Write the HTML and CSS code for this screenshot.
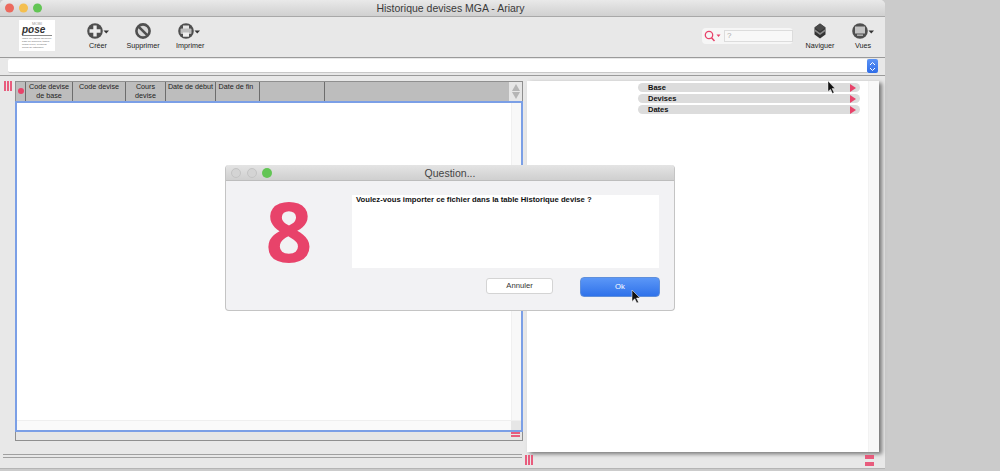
FILE: index.html
```html
<!DOCTYPE html>
<html lang="fr">
<head>
    <meta charset="UTF-8">
    <title>Historique devises MGA - Ariary</title>
    <link rel="stylesheet" href="styles.css">
</head>
<body>
    <div class="window">
        <div class="titlebar">
            <div class="lights">
                <span class="light red"></span>
                <span class="light yellow"></span>
                <span class="light green"></span>
            </div>
            <div class="title">Historique devises MGA - Ariary</div>
        </div>

        <div class="toolbar">
            <div class="logo">
                <div class="logo-top">MOBI</div>
                <div class="logo-name">pose</div>
                <div class="logo-line"></div>
                <div class="logo-small">INSTALLATEUR SPIRIUM</div>
                <div class="logo-small">base de données, tables</div>
                <div class="logo-small">mises à jour, révisions</div>
                <div class="logo-small">accès au catalogue</div>
            </div>
            <div class="tool tool-create">
                <svg width="30" height="20" viewBox="0 0 30 20">
                    <circle cx="10" cy="10" r="7.800" fill="#4f4f4f"/>
                    <path d="M8.300 4.500h3.400v3.800h3.800v3.400h-3.800v3.800H8.300v-3.800H4.500V8.300h3.800z" fill="#ececec"/>
                    <path d="M18.500 9.500h5.500l-2.750 3z" fill="#333"/>
                </svg>
                <span>Créer</span>
            </div>
            <div class="tool tool-delete">
                <svg width="20" height="20" viewBox="0 0 20 20">
                    <circle cx="10" cy="10" r="6.600" fill="#d8d8d8" stroke="#4f4f4f" stroke-width="2.600"/>
                    <path d="M5.800 5.800l8.400 8.400" stroke="#4f4f4f" stroke-width="2.600"/>
                </svg>
                <span>Supprimer</span>
            </div>
            <div class="tool tool-print">
                <svg width="30" height="20" viewBox="0 0 30 20">
                    <circle cx="10" cy="10" r="7.800" fill="#4f4f4f"/>
                    <rect x="7" y="4.500" width="6" height="11" fill="#e4e4e4"/>
                    <rect x="4.500" y="7.500" width="11" height="5.500" rx="1" fill="#bdbdbd"/>
                    <rect x="7" y="11.500" width="6" height="4" fill="#efefef"/>
                    <path d="M18.500 9.500h5.500l-2.750 3z" fill="#333"/>
                </svg>
                <span>Imprimer</span>
            </div>
            <div class="search">
                <svg width="17" height="12" viewBox="0 0 17 12">
                    <circle cx="5" cy="5" r="3.700" fill="none" stroke="#e8436a" stroke-width="1.300"/>
                    <path d="M7.500 7.800l3 3.200" stroke="#e8436a" stroke-width="1.500"/>
                    <path d="M12.500 4.500h4l-2 2.500z" fill="#e8436a"/>
                </svg>
                <div class="search-input">?</div>
            </div>
            <div class="tool tool-nav">
                <svg width="20" height="20" viewBox="0 0 20 20">
                    <path d="M10 2.500l5.500 4v7l-5.500 4-5.500-4v-7z" fill="#333"/>
                    <path d="M4.500 8l5.500 4 5.500-4v2L10 14l-5.500-4z" fill="#8a8a8a"/>
                    <path d="M10 2.500l5.500 4-5.500 4-5.500-4z" fill="#4a4a4a"/>
                </svg>
                <span>Naviguer</span>
            </div>
            <div class="tool tool-views">
                <svg width="30" height="20" viewBox="0 0 30 20">
                    <circle cx="10" cy="10" r="7.800" fill="#4f4f4f"/>
                    <rect x="5" y="5.500" width="10" height="7" fill="#c4c4c4"/>
                    <rect x="7" y="13.500" width="6" height="1.300" fill="#c4c4c4"/>
                    <path d="M18.500 9.500h5.500l-2.750 3z" fill="#333"/>
                </svg>
                <span>Vues</span>
            </div>
        </div>

        <div class="filter-row">
            <div class="filter-field"></div>
            <div class="stepper">
                <svg width="7" height="11" viewBox="0 0 7 11">
                    <path d="M1 4l2.500-2.500L6 4M1 7l2.500 2.500L6 7" fill="none" stroke="#fff" stroke-width="1"/>
                </svg>
            </div>
        </div>

        <div class="content">
            <div class="left-col">
                <div class="list-area">
                    <div class="handle-v handle-top"><i></i><i></i><i></i></div>
                    <div class="list">
                        <div class="list-head">
                            <div class="col col-mark"><span class="dot"></span></div>
                            <div class="col col-a">Code devise de base</div>
                            <div class="col col-b">Code devise</div>
                            <div class="col col-c">Cours devise</div>
                            <div class="col col-d">Date de début</div>
                            <div class="col col-e">Date de fin</div>
                            <div class="col col-f"></div>
                            <div class="col-rest"></div>
                            <div class="sort-arrows">
                                <span class="arrow-up"></span>
                                <span class="arrow-down"></span>
                            </div>
                        </div>
                        <div class="list-body">
                            <div class="list-rows">
                                <div class="rows-white"></div>
                                <div class="rows-scroll"></div>
                            </div>
                            <div class="list-hscroll">
                                <div class="rows-corner"></div>
                            </div>
                        </div>
                        <div class="list-foot">
                            <div class="handle-h"><i></i><i></i></div>
                        </div>
                    </div>
                </div>
                <div class="rules"></div>
            </div>

            <div class="right-col">
                <div class="side-panel">
                    <div class="groups">
                        <div class="group">Base<span class="tri"></span></div>
                        <div class="group">Devises<span class="tri"></span></div>
                        <div class="group">Dates<span class="tri"></span></div>
                    </div>
                    <div class="side-scroll"></div>
                </div>
                <div class="side-foot">
                    <div class="handle-v"><i></i><i></i><i></i></div>
                    <div class="handle-h handle-big"><i></i><i></i></div>
                </div>
            </div>
        </div>
    </div>

    <svg class="cursor cursor-top" width="9" height="13" viewBox="0 0 9 13">
        <path d="M1 0l7 7.500H5l2 4-1.500 1-2-4.200L1 10.500z" fill="#111" stroke="#fff" stroke-width=".4"/>
    </svg>

    <div class="dialog">
        <div class="dialog-title">
            <div class="lights">
                <span class="light off"></span>
                <span class="light off"></span>
                <span class="light green"></span>
            </div>
            <div class="dialog-name">Question...</div>
        </div>
        <div class="dialog-main">
            <div class="big-num">8</div>
            <div class="message">Voulez-vous importer ce fichier dans la table Historique devise ?</div>
        </div>
        <div class="dialog-buttons">
            <div class="btn btn-cancel">Annuler</div>
            <div class="btn btn-ok">Ok</div>
        </div>
    </div>

    <svg class="cursor cursor-ok" width="10" height="14" viewBox="0 0 10 14">
        <path d="M1 0l8 8H5.500l2 4.200-1.700.8-2-4.300L1 11.500z" fill="#111" stroke="#fff" stroke-width=".5"/>
    </svg>
</body>
</html>
```
FILE: styles.css
```css
:root {
    --pink: #e8436a;
    --chrome: #e8e8e8;
    --line: #9a9a9a;
    --blue: #7b9fe6;
}
* {
    box-sizing: border-box;
}
html, body {
    height: 471px;
}
body {
    margin: 0;
    background: #cbcbcb;
    font-family: "Liberation Sans", Arial, sans-serif;
    color: #222;
    overflow: hidden;
    position: relative;
}
.window {
    width: 885px;
    height: 469px;
    background: var(--chrome);
    border-bottom: 1px solid #b5b5b5;
    border-radius: 5px 5px 0 0;
    display: flex;
    flex-direction: column;
}
.titlebar {
    height: 17px;
    flex: none;
    position: relative;
    background: linear-gradient(#e9e9e9, #d0d0d0);
    border-bottom: 1px solid #a8a8a8;
    border-radius: 5px 5px 0 0;
    display: flex;
    align-items: center;
    justify-content: center;
}
.title {
    font-size: 10.500px;
    color: #3a3a3a;
    margin-left: 16px;
}
.lights {
    position: absolute;
    left: 5px;
    top: 50%;
    transform: translateY(-50%);
    display: flex;
    gap: 5px;
}
.light {
    width: 9px;
    height: 9px;
    border-radius: 50%;
}
.red { background: #ec6a5e; }
.yellow { background: #f4bf4f; }
.green { background: #62c554; }
.off { background: #d4d4d4; border: 1px solid #c4c4c4; }

.toolbar {
    height: 41px;
    flex: none;
    display: flex;
    align-items: flex-start;
    border-bottom: 1px solid var(--line);
}
.logo {
    width: 36px;
    height: 31px;
    margin: 3px 0 0 19px;
    padding: 2px 3px;
    background: #fff;
    flex: none;
    overflow: hidden;
}
.logo-top {
    font-size: 4px;
    line-height: 4px;
    color: #999;
    text-align: center;
}
.logo-name {
    font-size: 10px;
    line-height: 7px;
    font-weight: bold;
    font-style: italic;
    color: #333;
}
.logo-line {
    height: 1px;
    background: #888;
    margin: 2px 0 1px;
}
.logo-small {
    font-size: 2.500px;
    line-height: 3px;
    color: #666;
    white-space: nowrap;
}
.tool {
    display: flex;
    flex-direction: column;
    align-items: flex-start;
    padding-top: 4px;
    font-size: 7.200px;
    line-height: 10px;
    color: #222;
    flex: none;
}
.tool span {
    display: block;
    white-space: nowrap;
}
.tool svg {
    display: block;
}
.tool-create {
    margin-left: 30px;
    width: 33px;
}
.tool-create span { margin-left: 4px; }
.tool-delete {
    width: 50px;
    align-items: center;
}
.tool-print {
    margin-left: 8px;
    width: 30px;
}
.search {
    margin: 11px 0 0 496px;
    width: 91px;
    height: 16px;
    background: #f6f6f6;
    border-radius: 4px;
    flex: none;
    display: flex;
    align-items: center;
    padding-left: 2px;
    gap: 3px;
}
.search-input {
    width: 69px;
    height: 12px;
    background: #f8f8f8;
    border: 1px solid #dcdcdc;
    font-size: 8px;
    line-height: 10px;
    color: #aaa;
    padding-left: 2px;
}
.tool-nav {
    margin-left: 12px;
    width: 30px;
    align-items: center;
}
.tool-views {
    margin-left: 15px;
    width: 30px;
}
.tool-views span { margin-left: 5px; }

.filter-row {
    height: 18px;
    flex: none;
    display: flex;
    padding: 1px 0 0 8px;
    border-bottom: 1px solid var(--line);
}
.filter-field {
    width: 859px;
    height: 14px;
    background: #fff;
    border-bottom: 1px solid #c8c8c8;
    border-radius: 2px 0 0 2px;
}
.stepper {
    width: 11px;
    height: 14px;
    background: linear-gradient(#5b93f5, #2f6de8);
    border-radius: 2px;
    display: flex;
    align-items: center;
    justify-content: center;
}
.stepper svg { display: block; }

.content {
    flex: 1;
    min-height: 0;
    display: flex;
    padding-top: 5px;
}
.left-col {
    width: 527px;
    flex: none;
    display: flex;
    flex-direction: column;
}
.list-area {
    height: 360px;
    flex: none;
    display: flex;
    padding-left: 4px;
}
.handle-v {
    display: flex;
    gap: 1px;
    height: 10px;
    flex: none;
}
.handle-v i {
    width: 2px;
    height: 100%;
    background: var(--pink);
    opacity: .85;
}
.handle-top {
    width: 11px;
}
.list {
    width: 508px;
    height: 360px;
    flex: none;
    display: flex;
    flex-direction: column;
    border-right: 1px solid #8f8f8f;
    border-bottom: 1px solid #8f8f8f;
    border-left: 1px solid #8f8f8f;
}
.list-head {
    height: 20px;
    flex: none;
    display: flex;
    background: #bdbdbd;
    border-top: 1px solid #8f8f8f;
    font-size: 7.200px;
    line-height: 8.500px;
    color: #222;
}
.col {
    flex: none;
    text-align: center;
    border-right: 1px solid #6d6d6d;
    padding-top: 1px;
}
.col-mark {
    width: 10px;
    display: flex;
    justify-content: center;
    padding-top: 6px;
}
.dot {
    width: 6px;
    height: 6px;
    border-radius: 50%;
    background: var(--pink);
}
.col-a { width: 47px; }
.col-b { width: 53px; }
.col-c { width: 40px; padding-left: 6px; padding-right: 6px; }
.col-d { width: 50px; white-space: nowrap; }
.col-e { width: 44px; padding-right: 3px; }
.col-f { width: 65px; }
.col-rest { flex: 1; }
.sort-arrows {
    width: 13px;
    flex: none;
    background: #e6e6e6;
    display: flex;
    flex-direction: column;
    align-items: center;
    gap: 1px;
    padding-top: 2px;
}
.arrow-up, .arrow-down {
    width: 0;
    height: 0;
    border-left: 4px solid transparent;
    border-right: 4px solid transparent;
}
.arrow-up { border-bottom: 7px solid #b5b5b5; }
.arrow-down { border-top: 7px solid #b5b5b5; }
.list-body {
    height: 331px;
    flex: none;
    border: 2px solid var(--blue);
    margin-left: -1px;
    margin-right: -1px;
    display: flex;
    flex-direction: column;
    background: #fff;
}
.list-rows {
    flex: 1;
    display: flex;
}
.rows-white { flex: 1; }
.rows-scroll {
    width: 10px;
    background: #f8f8f8;
    border-left: 1px solid #f0f0f0;
}
.list-hscroll {
    height: 10px;
    flex: none;
    background: #fafafa;
    border-top: 1px solid #efefef;
    display: flex;
    justify-content: flex-end;
}
.rows-corner {
    width: 10px;
    background: #e6e6e6;
}
.list-foot {
    flex: 1;
    background: #e6e6e6;
    display: flex;
    justify-content: flex-end;
    padding-right: 2px;
}
.handle-h {
    display: flex;
    flex-direction: column;
    gap: 1px;
    width: 9px;
}
.handle-h i {
    height: 2px;
    background: var(--pink);
    opacity: .85;
}
.rules {
    margin: 13px 0 0 3px;
    width: 519px;
    height: 4px;
    border-top: 1px solid #a0a0a0;
    border-bottom: 1px solid #a0a0a0;
}
.right-col {
    width: 352px;
    flex: none;
    display: flex;
    flex-direction: column;
}
.side-panel {
    height: 371px;
    flex: none;
    background: #fff;
    display: flex;
    box-shadow: 3px 2px 4px #777;
}
.groups {
    flex: 1;
    padding: 2px 8px 0 111px;
    display: flex;
    flex-direction: column;
    gap: 2.200px;
}
.group {
    height: 9px;
    background: #dcdcdc;
    border-radius: 4.500px;
    font-size: 7.500px;
    line-height: 9px;
    font-weight: bold;
    color: #111;
    padding-left: 10px;
    position: relative;
}
.tri {
    position: absolute;
    right: 4px;
    top: .5px;
    width: 0;
    height: 0;
    border-top: 4px solid transparent;
    border-bottom: 4px solid transparent;
    border-left: 6px solid var(--pink);
}
.side-scroll {
    width: 11px;
    flex: none;
    background: #f8f8f8;
    border-left: 1px solid #f2f2f2;
}
.side-foot {
    flex: 1;
    display: flex;
    justify-content: space-between;
    padding: 3px 5px 0 0;
    margin-left: -2px;
}
.handle-big {
    width: 9px;
    gap: 3px;
}
.handle-big i {
    height: 4px;
}

.dialog {
    position: absolute;
    left: 225px;
    top: 165px;
    width: 450px;
    height: 146px;
    background: #f2f2f4;
    border: 1px solid #c4c4c4;
    border-top: 0;
    border-radius: 4px;
    display: flex;
    flex-direction: column;
}
.dialog-title {
    height: 16px;
    flex: none;
    position: relative;
    background: linear-gradient(#e4e4e4, #cfcfcf);
    border-bottom: 1px solid #bdbdbd;
    display: flex;
    align-items: center;
    justify-content: center;
    border-radius: 4px 4px 0 0;
}
.dialog-title .lights {
    left: 5px;
    gap: 5.500px;
}
.dialog-title .light {
    width: 10px;
    height: 10px;
}
.dialog-name {
    font-size: 10.500px;
    color: #444;
}
.dialog-main {
    display: flex;
    height: 73px;
    margin-top: 14px;
    flex: none;
}
.big-num {
    width: 126px;
    flex: none;
    font-family: "Open Sans", "Liberation Sans", sans-serif;
    font-size: 82px;
    font-weight: 700;
    line-height: 70px;
    color: var(--pink);
    text-align: center;
}
.message {
    width: 307px;
    flex: none;
    background: #fff;
    font-size: 7.700px;
    font-weight: bold;
    line-height: 9px;
    padding: 0 4px;
    color: #111;
    white-space: nowrap;
}
.dialog-buttons {
    display: flex;
    justify-content: flex-end;
    gap: 27px;
    padding: 9px 14px 0 0;
}
.btn {
    font-size: 7.700px;
    text-align: center;
    border-radius: 3px;
}
.btn-cancel {
    width: 67px;
    height: 16px;
    background: #fff;
    border: 1px solid #d4d4d4;
    line-height: 14px;
    color: #333;
    margin-top: 1px;
}
.btn-ok {
    width: 80px;
    height: 20px;
    line-height: 18px;
    background: linear-gradient(#5b97f7, #2f72ea);
    border: 1px solid #5f8fdb;
    border-radius: 4px;
    color: #fff;
}
.cursor {
    position: absolute;
    display: block;
}
.cursor-top {
    left: 827px;
    top: 81px;
}
.cursor-ok {
    left: 631px;
    top: 290px;
}
```
